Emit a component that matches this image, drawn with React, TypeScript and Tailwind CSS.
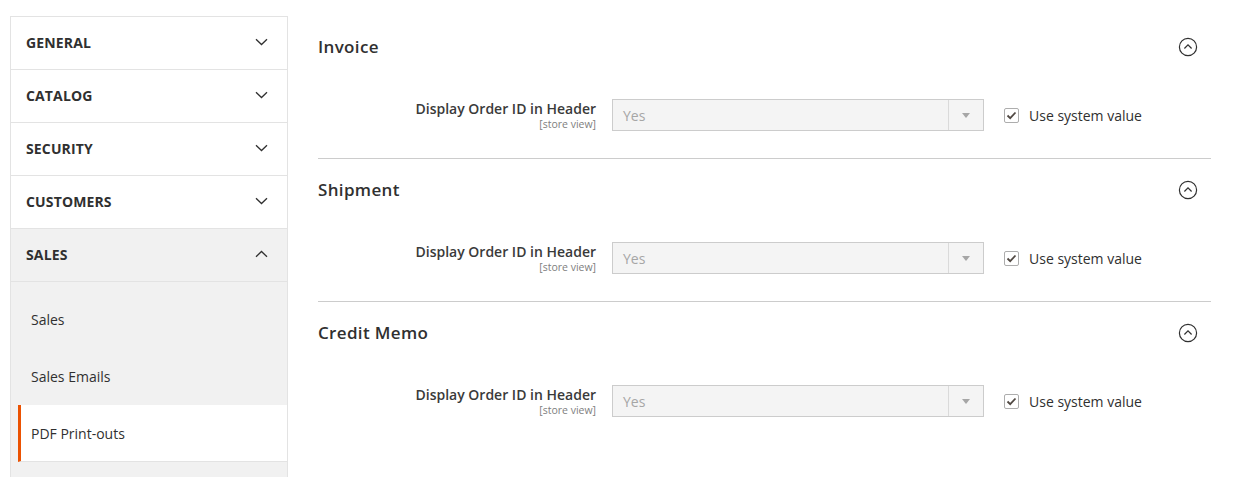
import React from 'react';

const NAV_GROUPS = ['GENERAL', 'CATALOG', 'SECURITY', 'CUSTOMERS'];
const SALES_ITEMS = ['Sales', 'Sales Emails', 'PDF Print-outs'];
const SECTIONS = ['Invoice', 'Shipment', 'Credit Memo'];

function Chevron({ up = false }: { up?: boolean }) {
  return (
    <svg width="13" height="8" viewBox="0 0 13 8" fill="none" className="mr-[19px]">
      <path
        d={up ? 'M1 6.8L6.5 1.5L12 6.8' : 'M1 1.2L6.5 6.5L12 1.2'}
        stroke="#303030"
        strokeWidth="1.3"
      />
    </svg>
  );
}

function CollapseIcon() {
  return (
    <svg width="20" height="20" viewBox="0 0 20 20" fill="none">
      <circle cx="10" cy="10" r="8.6" stroke="#303030" strokeWidth="1.2" />
      <path d="M6.4 11.5L10 7.9L13.6 11.5" stroke="#303030" strokeWidth="1.2" />
    </svg>
  );
}

function Section({ title, first }: { title: string; first?: boolean }) {
  return (
    <div className={`h-[143px] ${first ? 'pt-[1px]' : 'border-t border-[#cccccc]'}`}>
      <div className="flex items-center justify-between h-[62px]">
        <h2 className="text-[17px] font-semibold tracking-[0.02em] text-[#303030]">{title}</h2>
        <div className="mr-[13px]">
          <CollapseIcon />
        </div>
      </div>
      <div className="flex items-start mt-[21px]">
        <div className="w-[278px] text-right pt-[1px]">
          <div className="text-[14px] font-semibold text-[#3a3a3a] leading-[18px]">Display Order ID in Header</div>
          <div className="text-[10.5px] text-[#808080] leading-[12px]">[store view]</div>
        </div>
        <div className="ml-[16px] w-[372px] h-[32px] border border-[#cccccc] bg-[#f4f4f4] flex items-center">
          <span className="flex-1 pl-[10px] text-[14px] text-[#a6a6a6]">Yes</span>
          <div className="w-[35px] h-full border-l border-[#dadada] flex items-center justify-center">
            <svg width="8" height="5" viewBox="0 0 8 5">
              <path d="M0 0H8L4 5Z" fill="#a6a6a6" />
            </svg>
          </div>
        </div>
        <label className="ml-[20px] h-[32px] flex items-center gap-[10px]">
          <span className="w-[15px] h-[15px] border border-[#adadad] rounded-[2px] bg-white flex items-center justify-center">
            <svg width="11" height="9" viewBox="0 0 11 9" fill="none">
              <path d="M1.5 4.5L4.2 7.2L9.5 1.5" stroke="#514943" strokeWidth="1.8" />
            </svg>
          </span>
          <span className="text-[14px] text-[#303030]">Use system value</span>
        </label>
      </div>
    </div>
  );
}

export default function App() {
  return (
    <div
      className="w-[1234px] h-[477px] overflow-hidden bg-white flex text-[#303030]"
      style={{ fontFamily: '"Open Sans", "Noto Sans", sans-serif' }}
    >
      {/* Sidebar */}
      <aside className="ml-[10px] mt-[16px] w-[278px] border-l border-t border-r border-[#e3e3e3] self-start">
        {NAV_GROUPS.map(g => (
          <div key={g} className="h-[53px] border-b border-[#e3e3e3] flex items-center justify-between pl-[15px] pb-[2px]">
            <span className="text-[14px] font-bold tracking-[0.01em]">{g}</span>
            <Chevron />
          </div>
        ))}
        <div className="bg-[#f1f1f1]">
          <div className="h-[53px] border-b border-[#e3e3e3] flex items-center justify-between pl-[15px] pb-[2px]">
            <span className="text-[14px] font-bold tracking-[0.01em]">SALES</span>
            <Chevron up />
          </div>
          <ul className="pt-[9px] pb-[20px]">
            {SALES_ITEMS.map((item, i) => {
              const active = i === SALES_ITEMS.length - 1;
              return (
                <li
                  key={item}
                  className={`h-[57px] flex items-center text-[14px] ${
                    active
                      ? 'ml-[7px] bg-white border-l-[3px] border-l-[#eb5202] pl-[10px] border-b border-b-[#e3e3e3]'
                      : 'pl-[20px]'
                  }`}
                >
                  {item}
                </li>
              );
            })}
          </ul>
        </div>
      </aside>

      {/* Content */}
      <main className="ml-[30px] w-[893px] pt-[15px]">
        {SECTIONS.map((s, i) => (
          <Section key={s} title={s} first={i === 0} />
        ))}
      </main>
    </div>
  );
}
